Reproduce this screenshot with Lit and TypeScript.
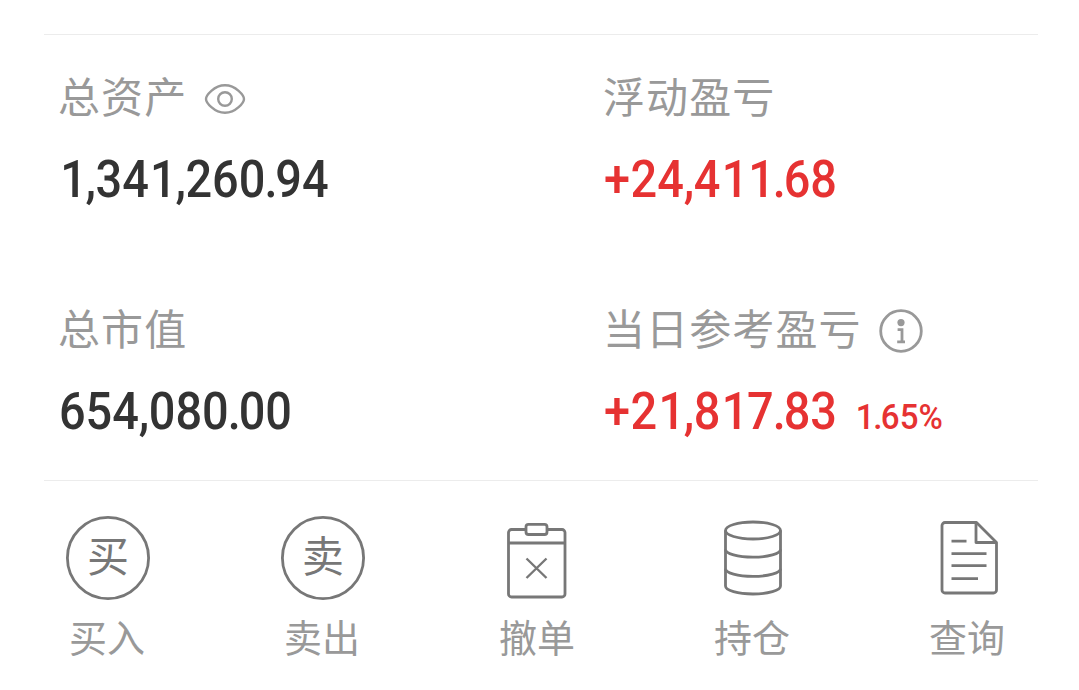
import { LitElement, html, css, svg } from "lit";
import { customElement, property } from "lit/decorators.js";
import { classMap } from "lit/directives/class-map.js";

const eyeIcon = html`
  <svg class="eye" width="42" height="32" viewBox="0 0 42 32">
    <path d="M2 16C2 12.500 10 2.200 21 2.200S40 12.500 40 16S32 29.800 21 29.800S2 19.500 2 16z" />
    <circle cx="21" cy="16" r="6.800" />
  </svg>
`;

const infoIcon = html`
  <svg class="info" width="44" height="44" viewBox="0 0 44 44">
    <circle cx="22" cy="22" r="20.300" />
    <circle class="solid" cx="22" cy="13.600" r="3.600" />
    <path class="stem" d="M18.600 20.600h4.400v12M18.200 32.800h7.800" />
  </svg>
`;

// the five 86px button pictures
const icons = {
  buy: svg`
    <circle cx="43" cy="43" r="40.600" />
    <text x="43" y="57">买</text>
  `,
  sell: svg`
    <circle cx="43" cy="43" r="40.600" />
    <text x="43" y="57">卖</text>
  `,
  cancel: svg`
    <path d="M30.500 14.500H16.500a3 3 0 0 0-3 3V79a3 3 0 0 0 3 3h50.500a3 3 0 0 0 3-3V17.500a3 3 0 0 0-3-3H52.500" />
    <rect x="31" y="9.300" width="21" height="10.200" rx="2.500" />
    <path d="M13.500 28h56.500" />
    <path class="thin" d="M31.500 43.500l20 19.500M51.500 43.500l-20 19.500" />
  `,
  hold: svg`
    <ellipse cx="43" cy="15.500" rx="27.500" ry="8.500" />
    <path d="M15.500 15.500v55.500c0 4.500 12.300 8 27.500 8s27.500-3.500 27.500-8v-55.500" />
    <path d="M15.500 34.500c0 4.300 12.300 7.700 27.500 7.700s27.500-3.400 27.500-7.700M15.500 53.700c0 4.300 12.300 7.700 27.500 7.700s27.500-3.400 27.500-7.700" />
  `,
  query: svg`
    <path d="M51.500 7.500H20a3 3 0 0 0-3 3V75a3 3 0 0 0 3 3h48.500a3 3 0 0 0 3-3V27.500z" />
    <path d="M51 7.500v20h20.500" />
    <path d="M26.500 26.200h15M26.500 38.700h35M26.500 50.700h35M26.500 63.700h26.500" />
  `,
};

// condensed figures: glyphs are squeezed, marks get a narrow cell
const SQUEEZE = 0.92;

function glyphStarts(text: string, size: number) {
  let x = 0;
  return [...text]
    .map((ch) => {
      let start = x / SQUEEZE;
      x += size * (ch === "," || ch === "." ? 0.196 : 0.522);
      // the period has wide side bearings, the 1 leans left in its cell
      if (ch === ".") start -= size * 0.02;
      if (ch === "1") start += size * 0.025;
      return start.toFixed(2);
    })
    .join(" ");
}

@customElement("account-stat")
export class AccountStat extends LitElement {
  @property({ type: String }) label = "";
  @property({ type: String }) value = "";
  @property({ type: String }) percent = "";
  @property({ type: String }) icon = "";
  @property({ type: Boolean }) gain = false;

  static styles = css`
    :host {
      display: block;
    }
    .label {
      display: flex;
      align-items: center;
      height: 60px;
      font-family: "Noto Sans CJK SC", sans-serif;
      font-size: 42px;
      letter-spacing: 1.1px;
      line-height: 60px;
      color: #999;
      white-space: nowrap;
    }
    .label svg {
      fill: none;
      stroke: #999;
      stroke-width: 2.4;
    }
    .label .eye {
      margin: 7px 0 0 17px;
    }
    .label .info {
      margin: 7px 0 0 17px;
      stroke-width: 2.8;
    }
    .info .solid {
      fill: #999;
      stroke: none;
    }
    .value {
      display: flex;
      margin-top: 25px;
      height: 60px;
      fill: #333;
      font-family: Roboto, sans-serif;
      font-weight: 500;
    }
    .gain {
      fill: #e63232;
    }
    .number {
      font-size: 51px;
    }
    .percent {
      font-size: 36px;
    }
  `;

  render() {
    return html`
      <div class="label">
        <span>${this.label}</span>
        ${this.icon === "eye" ? eyeIcon : ""}
        ${this.icon === "info" ? infoIcon : ""}
      </div>
      <div class=${classMap({ value: true, gain: this.gain })}>
        <svg width=${this.gain ? 252 : 300} height="60">
          <text
            class="number"
            transform="translate(1 0) scale(${SQUEEZE} 1)"
            x=${glyphStarts(this.value, 51)}
            y="47"
          >${this.value}</text>
        </svg>
        ${this.percent
          ? html`<svg width="100" height="60">
              <text
                class="percent"
                transform="scale(${SQUEEZE} 1)"
                x=${glyphStarts(this.percent, 36)}
                y="47"
              >${this.percent}</text>
            </svg>`
          : ""}
      </div>
    `;
  }
}

@customElement("action-button")
export class ActionButton extends LitElement {
  @property({ type: String }) label = "";
  @property({ type: String }) icon: keyof typeof icons = "buy";

  static styles = css`
    :host {
      display: flex;
      flex-direction: column;
      align-items: center;
    }
    svg {
      fill: none;
      stroke: #777;
      stroke-width: 2.8;
      stroke-linejoin: round;
    }
    .thin {
      stroke-width: 2.4;
    }
    text {
      fill: #777;
      stroke: none;
      text-anchor: middle;
      font-family: "Noto Sans CJK SC", sans-serif;
      font-size: 42px;
    }
    span {
      margin-top: 7px;
      padding-right: 1px;
      font-family: "Noto Sans CJK SC", sans-serif;
      font-size: 38px;
      line-height: 56px;
      color: #999;
    }
  `;

  render() {
    return html`
      <svg width="86" height="86" viewBox="0 0 86 86">${icons[this.icon]}</svg>
      <span>${this.label}</span>
    `;
  }
}

@customElement("app-root")
export class AppRoot extends LitElement {
  static styles = css`
    :host {
      display: block;
      box-sizing: border-box;
      height: 690px;
      padding-top: 34px;
      background: #fff;
      overflow: hidden;
    }
    .stats {
      display: grid;
      grid-template-columns: 545px 1fr;
      grid-template-rows: 232px 1fr;
      box-sizing: border-box;
      height: 447px;
      margin: 0 41px 0 44px;
      padding: 30px 0 0 14px;
      border-top: 1px solid #ececec;
      border-bottom: 1px solid #ececec;
    }
    .actions {
      display: grid;
      grid-template-columns: repeat(5, 215px);
      padding-top: 34px;
    }
  `;

  render() {
    return html`
      <div class="stats">
        <account-stat label="总资产" value="1,341,260.94" icon="eye"></account-stat>
        <account-stat label="浮动盈亏" value="+24,411.68" gain></account-stat>
        <account-stat label="总市值" value="654,080.00"></account-stat>
        <account-stat
          label="当日参考盈亏"
          value="+21,817.83"
          percent="1.65%"
          icon="info"
          gain
        ></account-stat>
      </div>
      <div class="actions">
        <action-button label="买入" icon="buy"></action-button>
        <action-button label="卖出" icon="sell"></action-button>
        <action-button label="撤单" icon="cancel"></action-button>
        <action-button label="持仓" icon="hold"></action-button>
        <action-button label="查询" icon="query"></action-button>
      </div>
    `;
  }
}
